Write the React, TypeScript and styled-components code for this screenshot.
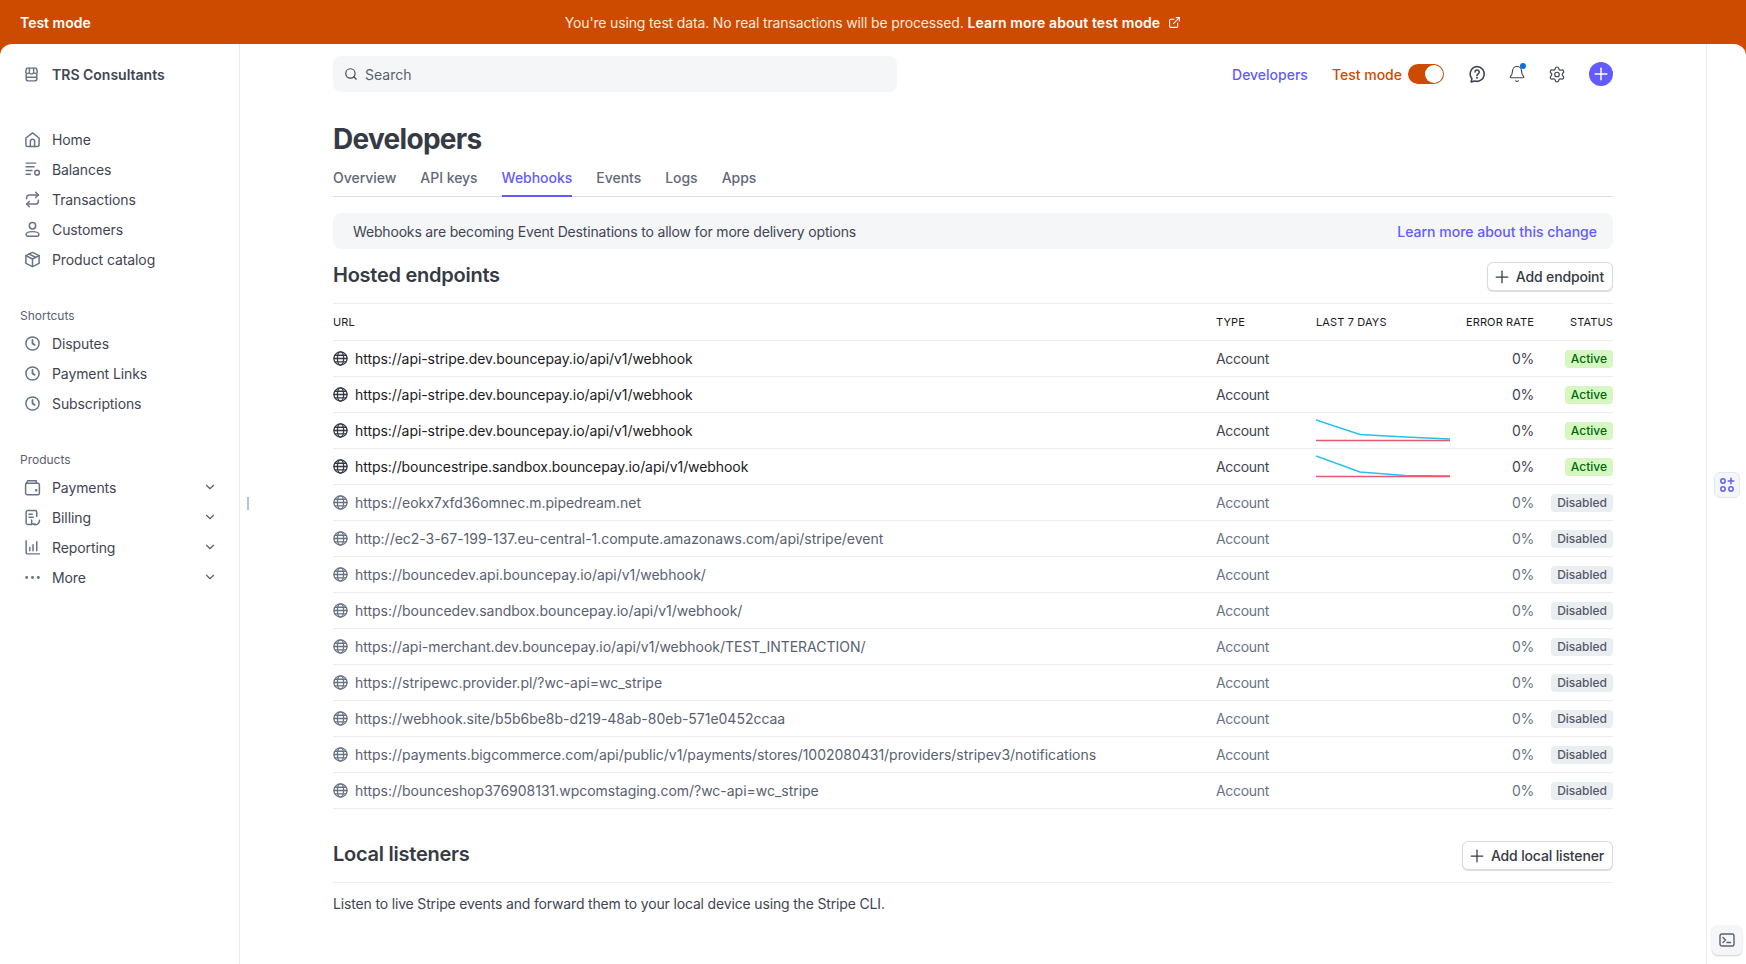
import styled, { createGlobalStyle } from "styled-components";
import { Bell, ChevronDown, ExternalLink, Plus, Search, Settings } from "lucide-react";
import type { ReactNode } from "react";

const GlobalStyle = createGlobalStyle`
  html, body { margin: 0; padding: 0; height: 100%; }
  body {
    background: #cc4b00;
    font-family: Inter, "Noto Sans", "Liberation Sans", sans-serif;
    font-size: 14px;
    color: #353a44;
    overflow: hidden;
    -webkit-font-smoothing: antialiased;
  }
  * { box-sizing: border-box; }
`;

const Banner = styled.div`
  height: 44px;
  position: relative;
  display: flex;
  align-items: center;
  justify-content: center;
  color: #fff;
  font-size: 14px;
`;
const BannerMode = styled.span`
  position: absolute;
  left: 20px;
  font-weight: 600;
`;
const BannerText = styled.span`
  display: flex;
  align-items: center;
  gap: 4px;
  color: #fbe9dc;
  letter-spacing: -0.15px;
`;
const BannerLink = styled.strong`
  font-weight: 600;
  color: #fff;
  letter-spacing: 0.1px;
  display: inline-flex;
  align-items: center;
  gap: 8px;
`;

const Shell = styled.div`
  height: 920px;
  display: flex;
  background: #fff;
  border-radius: 12px 12px 0 0;
  overflow: hidden;
  position: relative;
`;

const Sidebar = styled.aside`
  width: 240px;
  flex: none;
  border-right: 1px solid #e8ebef;
  padding: 0 20px;
`;
const Account = styled.div`
  height: 60px;
  display: flex;
  align-items: center;
  gap: 12px;
  padding-left: 3px;
  margin-bottom: 20px;
  font-weight: 600;
  color: #414552;
`;
const NavGroup = styled.nav`
  display: flex;
  flex-direction: column;
  margin-bottom: 32px;
`;
const NavLabel = styled.div`
  height: 20px;
  line-height: 20px;
  font-size: 12px;
  color: #596171;
  margin-bottom: 2px;
`;
const NavRow = styled.div`
  height: 30px;
  display: flex;
  align-items: center;
  gap: 11px;
  padding-left: 4px;
  color: #414552;
  letter-spacing: -0.1px;
`;
const NavText = styled.span`
  flex: 1;
`;
const NavChevron = styled(ChevronDown)`
  width: 14px;
  height: 14px;
  color: #596171;
  margin-right: 2px;
  stroke-width: 2;
`;
const IconSvg = styled.svg<{ $size?: number; $color?: string }>`
  width: ${(p) => p.$size ?? 17}px;
  height: ${(p) => p.$size ?? 17}px;
  flex: none;
  fill: none;
  stroke: ${(p) => p.$color ?? "#687385"};
  stroke-width: 1.4;
  stroke-linecap: round;
  stroke-linejoin: round;
`;
const Handle = styled.div`
  position: absolute;
  left: 247px;
  top: 453px;
  width: 2px;
  height: 13px;
  background: #b6c0d1;
`;

const Main = styled.main`
  flex: 1;
  min-width: 0;
  padding: 0 93px;
`;
const Topbar = styled.header`
  height: 60px;
  display: flex;
  align-items: center;
`;
const SearchBox = styled.div`
  width: 564px;
  height: 36px;
  background: #f5f6f8;
  border-radius: 8px;
  display: flex;
  align-items: center;
  gap: 7px;
  padding-left: 11px;
  color: #596171;
`;
const SearchIcon = styled(Search)`
  width: 14px;
  height: 14px;
  color: #414552;
  stroke-width: 2;
`;
const TopActions = styled.div`
  margin-left: auto;
  display: flex;
  align-items: center;
`;
const DevLink = styled.span`
  color: #635bff;
  font-weight: 500;
  margin-right: 24px;
`;
const ModeLabel = styled.span`
  color: #cc4b00;
  font-weight: 500;
  margin-right: 6px;
`;
const Toggle = styled.span`
  width: 36px;
  height: 20px;
  border-radius: 10px;
  background: #cc4b00;
  display: flex;
  justify-content: flex-end;
  align-items: center;
  padding-right: 1px;
  margin-right: 24px;
`;
const ToggleKnob = styled.span`
  width: 18px;
  height: 18px;
  border-radius: 50%;
  background: #fff;
`;
const TopIconSlot = styled.span`
  width: 18px;
  height: 18px;
  margin-right: 22px;
  display: flex;
  align-items: center;
  justify-content: center;
  position: relative;
  color: #414552;
`;
const NotifyDot = styled.span`
  position: absolute;
  right: 0;
  top: -2px;
  width: 6px;
  height: 6px;
  border-radius: 50%;
  background: #0570de;
`;
const CreateButton = styled.span`
  width: 24px;
  height: 24px;
  border-radius: 50%;
  margin-left: 1px;
  background: #635bff;
  color: #fff;
  display: flex;
  align-items: center;
  justify-content: center;
`;

const Title = styled.h1`
  margin: 17px 0 3px;
  font-size: 28px;
  line-height: 36px;
  font-weight: 700;
  letter-spacing: -0.7px;
  color: #353a44;
`;
const Tabs = styled.div`
  display: flex;
  gap: 24px;
  height: 37px;
  border-bottom: 1px solid #d8dee4;
`;
const Tab = styled.div<{ $active?: boolean }>`
  height: 37px;
  padding-top: 9px;
  font-weight: 500;
  letter-spacing: -0.03px;
  color: ${(p) => (p.$active ? "#635bff" : "#5f6879")};
  border-bottom: 2px solid ${(p) => (p.$active ? "#635bff" : "transparent")};
`;
const Notice = styled.div`
  margin-top: 16px;
  height: 36px;
  background: #f5f6f8;
  border-radius: 8px;
  padding: 0 16px 0 20px;
  display: flex;
  align-items: center;
  justify-content: space-between;
  color: #414552;
  letter-spacing: -0.17px;
`;
const NoticeLink = styled.span`
  color: #635bff;
  font-weight: 500;
  letter-spacing: 0;
`;
const SectionHead = styled.div`
  display: flex;
  align-items: flex-start;
  justify-content: space-between;
  height: 55px;
  padding-top: 13px;
  border-bottom: 1px solid #ebeef1;
`;
const LocalHead = styled(SectionHead)`
  margin-top: 32px;
  height: 42px;
  padding-top: 0;
`;
const SectionTitle = styled.h2`
  margin: 0;
  font-size: 20px;
  line-height: 26px;
  font-weight: 600;
  letter-spacing: -0.25px;
  color: #353a44;
`;
const OutlineButton = styled.button`
  height: 29px;
  padding: 0 8px 0 4px;
  display: flex;
  align-items: center;
  gap: 4px;
  background: #fff;
  border: 1px solid #d5dbe1;
  border-radius: 6px;
  box-shadow: 0 1px 1px rgba(0, 0, 0, 0.14);
  font: 500 14px Inter, "Noto Sans", sans-serif;
  letter-spacing: -0.15px;
  color: #353a44;
`;
const HeadRow = styled.div`
  display: grid;
  grid-template-columns: 883px 100px 134px 84px 79px;
  height: 37px;
  align-items: center;
  border-bottom: 1px solid #ebeef1;
  font-size: 11px;
  font-weight: 400;
  letter-spacing: 0.12px;
  color: #1a1b25;
`;
const Right = styled.span`
  text-align: right;
`;
const Row = styled.div<{ $off: boolean }>`
  display: grid;
  grid-template-columns: 883px 100px 134px 84px 79px;
  height: 36px;
  align-items: center;
  border-bottom: 1px solid #ebeef1;
  color: ${(p) => (p.$off ? "#687385" : "#414552")};
`;
const UrlCell = styled.span<{ $off: boolean }>`
  display: flex;
  align-items: center;
  gap: 7px;
  letter-spacing: ${(p) => (p.$off ? "-0.02px" : "-0.07px")};
  color: ${(p) => (p.$off ? "#596171" : "#1a1b25")};
`;
const TypeCell = styled.span`
  letter-spacing: -0.3px;
`;
const RateCell = styled(Right)`
  letter-spacing: -0.3px;
`;
const PillCell = styled.span`
  display: flex;
  justify-content: flex-end;
`;
const Pill = styled.span<{ $off: boolean }>`
  height: 18px;
  line-height: 18px;
  padding: 0 6px;
  border-radius: 4px;
  font-size: 12px;
  font-weight: 500;
  background: ${(p) => (p.$off ? "#ebeef1" : "#d7f7c2")};
  color: ${(p) => (p.$off ? "#545969" : "#006908")};
`;
const Spark = styled.svg`
  width: 134px;
  height: 30px;
  display: block;
  fill: none;
`;
const ListenerText = styled.p`
  margin: 11px 0 0;
  line-height: 20px;
  color: #414552;
  letter-spacing: -0.16px;
`;

const Rail = styled.aside`
  width: 40px;
  flex: none;
  border-left: 1px solid #e8ebef;
  display: flex;
  flex-direction: column;
  align-items: center;
  padding: 428px 0 9px;
`;
const AppsButton = styled.div`
  width: 26px;
  height: 26px;
  border-radius: 6px;
  border: 1px solid #e3e8ee;
  background: #f5f6f8;
  display: flex;
  align-items: center;
  justify-content: center;
`;
const TerminalButton = styled.div`
  margin-top: auto;
  width: 30px;
  height: 30px;
  border-radius: 6px;
  background: #f5f6f8;
  box-shadow: 0 1px 2px rgba(0, 0, 0, 0.2);
  display: flex;
  align-items: center;
  justify-content: center;
`;

const Icon = ({ children, size, color }: { children: ReactNode; size?: number; color?: string }) => (
  <IconSvg viewBox="0 0 16 16" $size={size} $color={color}>{children}</IconSvg>
);

const icons: Record<string, ReactNode> = {
  store: <><path d="M3.5 2h9l1 3.5a1.8 1.8 0 0 1-3.4.6 2.2 2.2 0 0 1-4.2 0 1.8 1.8 0 0 1-3.4-.6z" /><path d="M6 2v3M10 2v3" /><path d="M3 7.500V12a2 2 0 0 0 2 2h6a2 2 0 0 0 2-2V7.500M3 10.500h10" /></>,
  home: <><path d="M1.800 6.600 8 1.800l6.200 4.800V13a1.500 1.500 0 0 1-1.500 1.500H3.300A1.500 1.500 0 0 1 1.800 13z" /><path d="M6 14.500V9.800a2 2 0 0 1 4 0v4.700" /></>,
  balances: <><path d="M2 2h9M2 5.500h7.500M2 9h5.500M2 12.500h4" /><circle cx="12.300" cy="11" r="2.200" /></>,
  transactions: <><path d="M11 1.200 13.500 3.700 11 6.200" /><path d="M13.500 3.700H5A2.500 2.500 0 0 0 2.500 6.200v1" /><path d="M5 14.800 2.500 12.300 5 9.800" /><path d="M2.500 12.300H11a2.500 2.500 0 0 0 2.500-2.500v-1" /></>,
  customers: <><circle cx="8" cy="4.500" r="3" /><path d="M2 12.800c0-1.700 2.400-2.800 6-2.800s6 1.100 6 2.800a1.500 1.500 0 0 1-1.500 1.500h-9A1.500 1.500 0 0 1 2 12.800z" /></>,
  catalog: <><path d="M8 1.300 14.200 4.300v7.400L8 14.700l-6.200-3V4.300z" /><path d="M1.800 4.300 8 7.500l6.200-3.200M8 7.500v7.200M4.800 2.900l6.300 3.100" /></>,
  clock: <><circle cx="8" cy="8" r="6.200" /><path d="M8 4.700V8l2 1.300" strokeWidth="1.700" /></>,
  payments: <><path d="M1.500 5.300A1.300 1.300 0 0 1 2.800 4h10.400a1.300 1.300 0 0 1 1.300 1.300v8.200a1.300 1.300 0 0 1-1.300 1.300H2.800a1.300 1.300 0 0 1-1.300-1.300z" /><path d="M2 4.300 3 2.400a1 1 0 0 1 1-.7h7.500V4" /><circle cx="11.500" cy="10.500" r=".5" /></>,
  billing: <><path d="M7 14.500H3.500A1.500 1.500 0 0 1 2 13V3a1.500 1.500 0 0 1 1.500-1.500h7A1.500 1.500 0 0 1 12 3v4" /><path d="M4.700 5h3M4.700 7.800h4" /><path d="M14.500 10.500a3.800 3.800 0 0 1-6 3.600" /><path d="M7.200 10.400v3.600h3.300" /></>,
  reporting: <><path d="M2 1.700V13a1 1 0 0 0 1 1h11.500M5.500 8v3M8.500 5.500V11M12 2.500V11" /></>,
  help: <><path d="M8 1.300a6.600 6.600 0 1 1-2.100 12.900L2.800 15l.7-2.900A6.600 6.600 0 0 1 8 1.300z" /><path d="M6.200 6.200A1.900 1.900 0 1 1 8.900 8c-.7.400-.9.700-.9 1.300" /><circle cx="8" cy="11.400" r=".3" /></>,
};

const More = () => (
  <IconSvg viewBox="0 0 16 16">
    <circle cx="2.500" cy="8" r=".7" fill="#687385" />
    <circle cx="8" cy="8" r=".7" fill="#687385" />
    <circle cx="13.500" cy="8" r=".7" fill="#687385" />
  </IconSvg>
);

const Globe = ({ off }: { off: boolean }) => (
  <Icon size={15} color={off ? "#687385" : "#353a44"}>
    <circle cx="8" cy="8" r="7" />
    <ellipse cx="8" cy="8" rx="3.300" ry="7" />
    <path d="M1 8h14M2 4.500h12M2 11.500h12" />
  </Icon>
);

const Sparkline = ({ points }: { points: string }) => (
  <Spark viewBox="0 0 134 30">
    <polyline points={points} stroke="#26c0f0" strokeWidth="1.500" />
    <line x1="0" y1="24.500" x2="134" y2="24.500" stroke="#e8596f" strokeWidth="1.500" />
  </Spark>
);

const mainNav = [
  ["home", "Home"],
  ["balances", "Balances"],
  ["transactions", "Transactions"],
  ["customers", "Customers"],
  ["catalog", "Product catalog"],
];
const shortcuts = ["Disputes", "Payment Links", "Subscriptions"];
const products = [
  ["payments", "Payments"],
  ["billing", "Billing"],
  ["reporting", "Reporting"],
];
const tabs = ["Overview", "API keys", "Webhooks", "Events", "Logs", "Apps"];

const hook = "https://api-stripe.dev.bouncepay.io/api/v1/webhook";
const endpoints: { url: string; off: boolean; chart?: string }[] = [
  { url: hook, off: false },
  { url: hook, off: false },
  { url: hook, off: false, chart: "0,4 44,18.500 89,21 134,23" },
  { url: "https://bouncestripe.sandbox.bouncepay.io/api/v1/webhook", off: false, chart: "0,4 44,20 89,23.500 134,24" },
  { url: "https://eokx7xfd36omnec.m.pipedream.net", off: true },
  { url: "http://ec2-3-67-199-137.eu-central-1.compute.amazonaws.com/api/stripe/event", off: true },
  { url: "https://bouncedev.api.bouncepay.io/api/v1/webhook/", off: true },
  { url: "https://bouncedev.sandbox.bouncepay.io/api/v1/webhook/", off: true },
  { url: "https://api-merchant.dev.bouncepay.io/api/v1/webhook/TEST_INTERACTION/", off: true },
  { url: "https://stripewc.provider.pl/?wc-api=wc_stripe", off: true },
  { url: "https://webhook.site/b5b6be8b-d219-48ab-80eb-571e0452ccaa", off: true },
  { url: "https://payments.bigcommerce.com/api/public/v1/payments/stores/1002080431/providers/stripev3/notifications", off: true },
  { url: "https://bounceshop376908131.wpcomstaging.com/?wc-api=wc_stripe", off: true },
];

export default function App() {
  return (
    <>
      <GlobalStyle />
      <Banner>
        <BannerMode>Test mode</BannerMode>
        <BannerText>
          You're using test data. No real transactions will be processed.
          <BannerLink>
            Learn more about test mode
            <ExternalLink size={13} strokeWidth={2} />
          </BannerLink>
        </BannerText>
      </Banner>
      <Shell>
        <Sidebar>
          <Account>
            <Icon>{icons.store}</Icon>
            TRS Consultants
          </Account>
          <NavGroup>
            {mainNav.map(([icon, label]) => (
              <NavRow key={label}>
                <Icon>{icons[icon]}</Icon>
                <NavText>{label}</NavText>
              </NavRow>
            ))}
          </NavGroup>
          <NavGroup>
            <NavLabel>Shortcuts</NavLabel>
            {shortcuts.map((label) => (
              <NavRow key={label}>
                <Icon>{icons.clock}</Icon>
                <NavText>{label}</NavText>
              </NavRow>
            ))}
          </NavGroup>
          <NavGroup>
            <NavLabel>Products</NavLabel>
            {products.map(([icon, label]) => (
              <NavRow key={label}>
                <Icon>{icons[icon]}</Icon>
                <NavText>{label}</NavText>
                <NavChevron />
              </NavRow>
            ))}
            <NavRow>
              <More />
              <NavText>More</NavText>
              <NavChevron />
            </NavRow>
          </NavGroup>
        </Sidebar>
        <Handle />
        <Main>
          <Topbar>
            <SearchBox>
              <SearchIcon />
              Search
            </SearchBox>
            <TopActions>
              <DevLink>Developers</DevLink>
              <ModeLabel>Test mode</ModeLabel>
              <Toggle><ToggleKnob /></Toggle>
              <TopIconSlot><Icon size={18} color="#414552">{icons.help}</Icon></TopIconSlot>
              <TopIconSlot>
                <Bell size={18} strokeWidth={1.5} />
                <NotifyDot />
              </TopIconSlot>
              <TopIconSlot><Settings size={19} strokeWidth={1.6} /></TopIconSlot>
              <CreateButton><Plus size={20} strokeWidth={1.8} /></CreateButton>
            </TopActions>
          </Topbar>
          <Title>Developers</Title>
          <Tabs>
            {tabs.map((t) => (
              <Tab key={t} $active={t === "Webhooks"}>{t}</Tab>
            ))}
          </Tabs>
          <Notice>
            Webhooks are becoming Event Destinations to allow for more delivery options
            <NoticeLink>Learn more about this change</NoticeLink>
          </Notice>
          <SectionHead>
            <SectionTitle>Hosted endpoints</SectionTitle>
            <OutlineButton><Plus size={20} strokeWidth={1.5} />Add endpoint</OutlineButton>
          </SectionHead>
          <HeadRow>
            <span>URL</span>
            <span>TYPE</span>
            <span>LAST 7 DAYS</span>
            <Right>ERROR RATE</Right>
            <Right>STATUS</Right>
          </HeadRow>
          {endpoints.map((e, i) => (
            <Row key={i} $off={e.off}>
              <UrlCell $off={e.off}><Globe off={e.off} />{e.url}</UrlCell>
              <TypeCell>Account</TypeCell>
              <span>{e.chart && <Sparkline points={e.chart} />}</span>
              <RateCell>0%</RateCell>
              <PillCell><Pill $off={e.off}>{e.off ? "Disabled" : "Active"}</Pill></PillCell>
            </Row>
          ))}
          <LocalHead>
            <SectionTitle>Local listeners</SectionTitle>
            <OutlineButton><Plus size={20} strokeWidth={1.5} />Add local listener</OutlineButton>
          </LocalHead>
          <ListenerText>Listen to live Stripe events and forward them to your local device using the Stripe CLI.</ListenerText>
        </Main>
        <Rail>
          <AppsButton>
            <Icon size={16} color="#635bff">
              <circle cx="4" cy="4" r="2.200" strokeWidth="1.500" />
              <circle cx="4" cy="12" r="2.200" strokeWidth="1.500" />
              <circle cx="12" cy="12" r="2.200" strokeWidth="1.500" />
              <path d="M12 1.200v5.600M9.200 4h5.600" strokeWidth="1.500" />
            </Icon>
          </AppsButton>
          <TerminalButton>
            <Icon size={16} color="#596171">
              <rect x="1" y="2" width="14" height="12" rx="2" />
              <path d="M4 5.500 6.500 8 4 10.500M8 10.500h3.500" />
            </Icon>
          </TerminalButton>
        </Rail>
      </Shell>
    </>
  );
}
